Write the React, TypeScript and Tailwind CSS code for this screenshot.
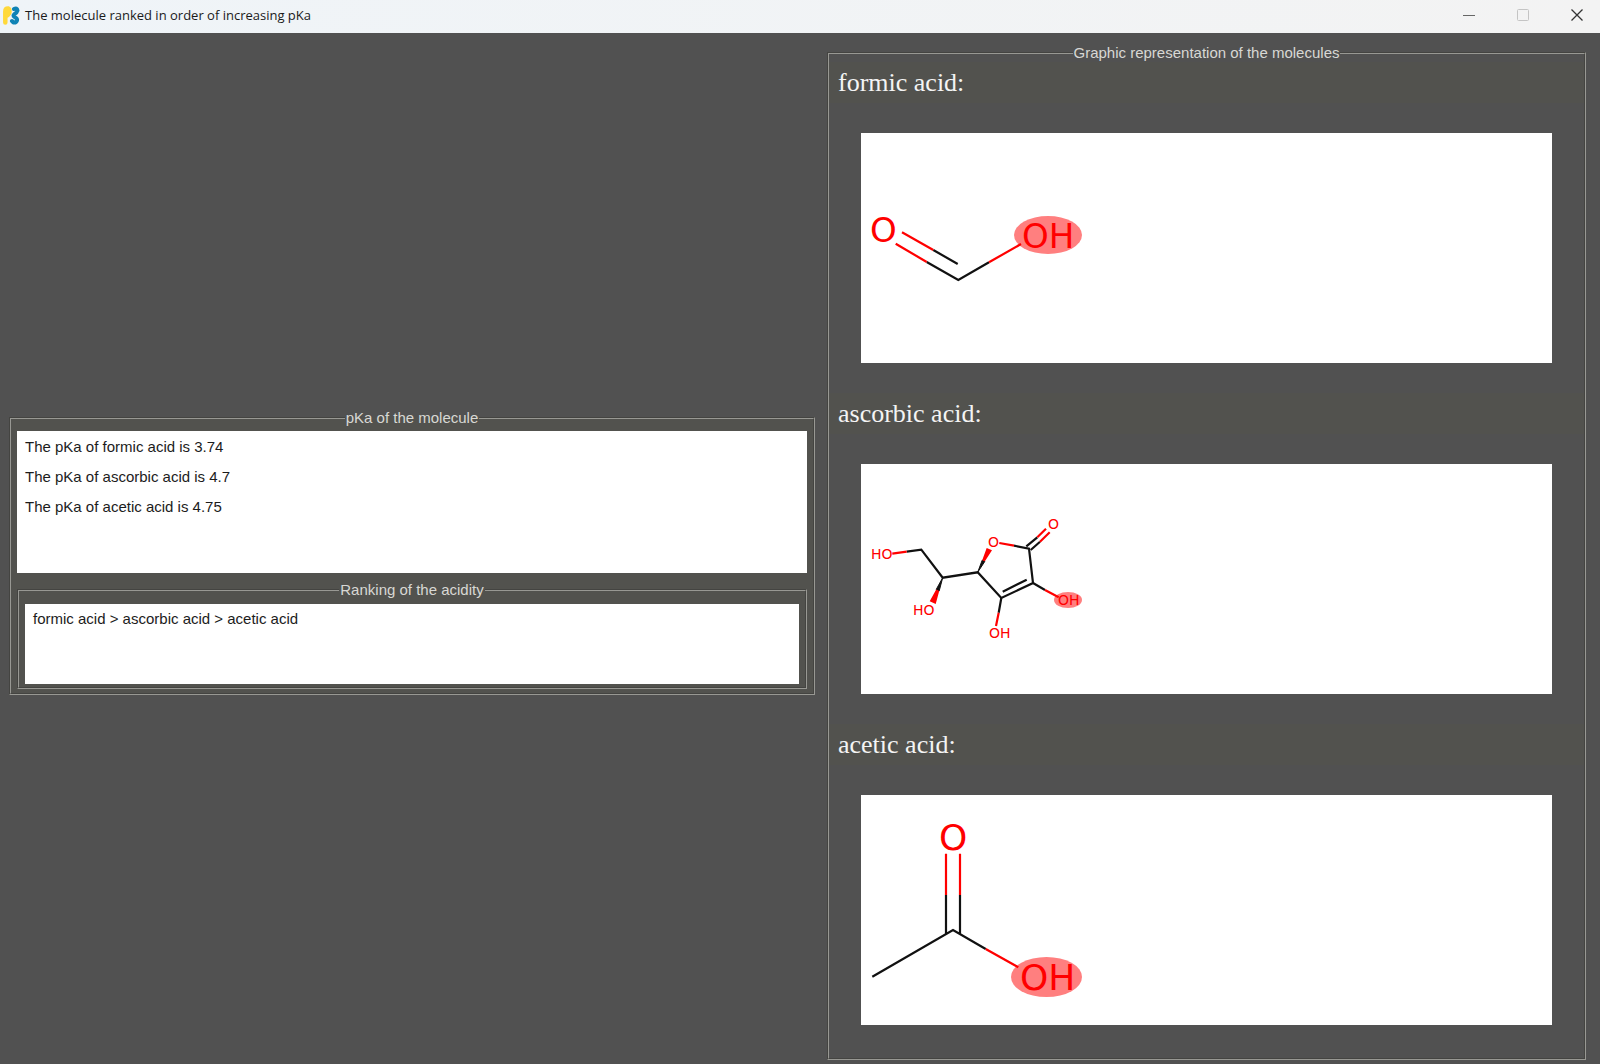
import type { ReactNode } from "react";

const RED = "#ff0000";
const BLACK = "#111111";
const GLOW = "#ff7f7f";

function Logo() {
  return (
    <svg
      className="size-5 shrink-0"
      viewBox="0 0 20 20"
      fill="none"
      strokeLinecap="round"
      strokeLinejoin="round"
      aria-hidden="true"
    >
      <path d="M3.300 17.500V6.500Q3.300 3.500 6 3.500Q7.500 4 7.500 6.500Q7.500 9 5 10.500" stroke="#ffd93b" strokeWidth="4.500" />
      <path d="M12 4Q15 2.500 15.500 5.500Q15 7.500 12.500 9Q10.500 10.500 12.500 12Q15.500 13.500 15 15.500Q14 18 11.500 17.500L10 16" stroke="#0f83b5" strokeWidth="4" />
    </svg>
  );
}

function TitleBar() {
  return (
    <header className="flex h-[33px] items-center justify-between bg-linear-to-r from-[#eff4f8] to-[#f3f3f3] pb-[3px] pl-[2px]">
      <div className="flex items-center gap-[3px]">
        <Logo />
        <h1 className="font-['Open_Sans',sans-serif] text-[13px] leading-5 text-[#1a1a1a]">
          The molecule ranked in order of increasing pKa
        </h1>
      </div>
      <div className="flex items-center">
        <button type="button" aria-label="Minimize" className="flex h-[30px] w-[54px] items-center justify-center">
          <svg className="size-3" viewBox="0 0 12 12" stroke="#666" fill="none">
            <path d="M0 6.500H12" />
          </svg>
        </button>
        <button type="button" aria-label="Maximize" disabled className="flex h-[30px] w-[54px] items-center justify-center">
          <svg className="size-3" viewBox="0 0 12 12" stroke="#c4c4c4" fill="none">
            <rect x=".5" y=".5" width="11" height="11" rx="1" />
          </svg>
        </button>
        <button type="button" aria-label="Close" className="flex h-[30px] w-[50px] items-center justify-center pl-1">
          <svg className="size-3" viewBox="0 0 12 12" stroke="#333" strokeWidth="1.300" fill="none">
            <path d="M.5 .5L11.500 11.500M11.500 .5L.5 11.500" />
          </svg>
        </button>
      </div>
    </header>
  );
}

function Frame({ title, className, children }: { title: string; className: string; children: ReactNode }) {
  return (
    <fieldset className={`min-w-0 border-2 border-[#989893] [border-style:groove] ${className}`}>
      <legend className="mx-auto px-px text-[15px] leading-[18px] text-[#d8d8d4]">{title}</legend>
      {children}
    </fieldset>
  );
}

function Bond({ d, color = BLACK }: { d: string; color?: string }) {
  return <path d={d} stroke={color} fill="none" />;
}

function Atom({ x, y, size, children }: { x: number; y: number; size: number; children: string }) {
  return (
    <text x={x} y={y} fontSize={size} fill={RED} fontFamily="'DejaVu Sans', sans-serif">
      {children}
    </text>
  );
}

function Drawing({ label, children }: { label: string; children: ReactNode }) {
  return (
    <svg role="img" aria-label={label} className="h-[230px] w-[230px]" viewBox="0 0 230 230" strokeWidth="2.200">
      {children}
    </svg>
  );
}

function FormicAcid() {
  return (
    <Drawing label="Structure of formic acid">
      <ellipse cx="187" cy="102" rx="34" ry="19" fill={GLOW} />
      <Bond d="M72.300 117L96.700 131M65.700 129L97.300 147L128 129.300" />
      <Bond d="M41 99.300L72.300 117M34.700 110.700L65.700 129M128 129.300L160 111" color={RED} />
      <Atom x={9} y={109} size={34}>O</Atom>
      <Atom x={161} y={115} size={34}>OH</Atom>
    </Drawing>
  );
}

function AscorbicAcid() {
  return (
    <Drawing label="Structure of ascorbic acid">
      <ellipse cx="207" cy="136" rx="14" ry="8" fill={GLOW} />
      <Bond d="M45.700 87.700L60.300 85.700L81.700 113.700L116.700 108.300L140.300 134L172 119L168 84.700L153 81.700" />
      <Bond d="M165.700 115.700L141.700 127.700M140.300 134L137.700 148.700M172 119L184 126M165.300 82.300L176.300 73.300M169.700 86L179 77.700" />
      <Bond
        d="M31.300 89.700L45.700 87.700M138.300 79L153 81.700M176.300 73.300L185 64.700M179 77.700L188.700 68.300M137.700 148.700L135 162M184 126L197.700 133.300"
        color={RED}
      />
      <path d="M81.700 113.700L75.200 125.500L78.200 126.900ZM116.700 108.300L121.200 96.200L123.900 97.300Z" fill={BLACK} stroke={BLACK} strokeWidth="1" />
      <path
        d="M75.200 125.500L68.700 137.300L74.700 140L78.200 126.900ZM121.200 96.200L125.700 84L131 86.300L123.900 97.300Z"
        fill={RED}
      />
      <Atom x={10} y={95} size={14}>HO</Atom>
      <Atom x={52} y={151} size={14}>HO</Atom>
      <Atom x={127} y={83} size={14}>O</Atom>
      <Atom x={187} y={65} size={14}>O</Atom>
      <Atom x={128} y={174} size={14}>OH</Atom>
      <Atom x={197} y={141} size={14}>OH</Atom>
    </Drawing>
  );
}

function AceticAcid() {
  return (
    <Drawing label="Structure of acetic acid">
      <ellipse cx="185.500" cy="182" rx="35.500" ry="20" fill={GLOW} />
      <Bond d="M11.300 181.700L92 135L124.700 154M85 100V138.500M99 100V138.500" />
      <Bond d="M85 58.700V100M99 58.700V100M124.700 154L157.300 172.300" color={RED} />
      <Atom x={78} y={55} size={36}>O</Atom>
      <Atom x={159} y={195} size={36}>OH</Atom>
    </Drawing>
  );
}

const molecules = [
  { name: "formic acid", pka: "3.74", drawing: <FormicAcid /> },
  { name: "ascorbic acid", pka: "4.7", drawing: <AscorbicAcid /> },
  { name: "acetic acid", pka: "4.75", drawing: <AceticAcid /> },
];

export default function App() {
  return (
    <div className="flex min-h-screen flex-col bg-[#515151] font-['Liberation_Sans',Arial,sans-serif]">
      <TitleBar />
      <main className="grid grow grid-cols-[806fr_759fr] items-center gap-3 pt-[11px] pr-[14px] pb-1 pl-[9px]">
        <Frame title="pKa of the molecule" className="bg-[#52524e] px-[6px] pt-1 pb-1">
          <ul className="min-h-[142px] bg-white px-2 pt-px text-[15px] leading-[30px] text-[#1c1c1c]">
            {molecules.map((m) => (
              <li key={m.name}>
                The pKa of {m.name} is {m.pka}
              </li>
            ))}
          </ul>
          <div className="pt-2">
            <Frame title="Ranking of the acidity" className="px-[6px] pt-[5px] pb-[3px]">
              <p className="min-h-20 bg-white px-2 text-[15px] leading-[30px] text-[#1c1c1c]">
                {molecules.map((m) => m.name).join(" > ")}
              </p>
            </Frame>
          </div>
        </Frame>
        <Frame title="Graphic representation of the molecules" className="self-stretch">
          {molecules.map((m) => (
            <section key={m.name} className="pb-[30px]">
              <h2 className="mb-[30px] bg-[#52524e] pt-px pl-[9px] font-['Liberation_Serif','Times_New_Roman',serif] text-[26px] leading-10 text-[#f4f4f4]">
                {m.name}:
              </h2>
              <div className="mr-8 ml-8 bg-white">{m.drawing}</div>
            </section>
          ))}
        </Frame>
      </main>
    </div>
  );
}
